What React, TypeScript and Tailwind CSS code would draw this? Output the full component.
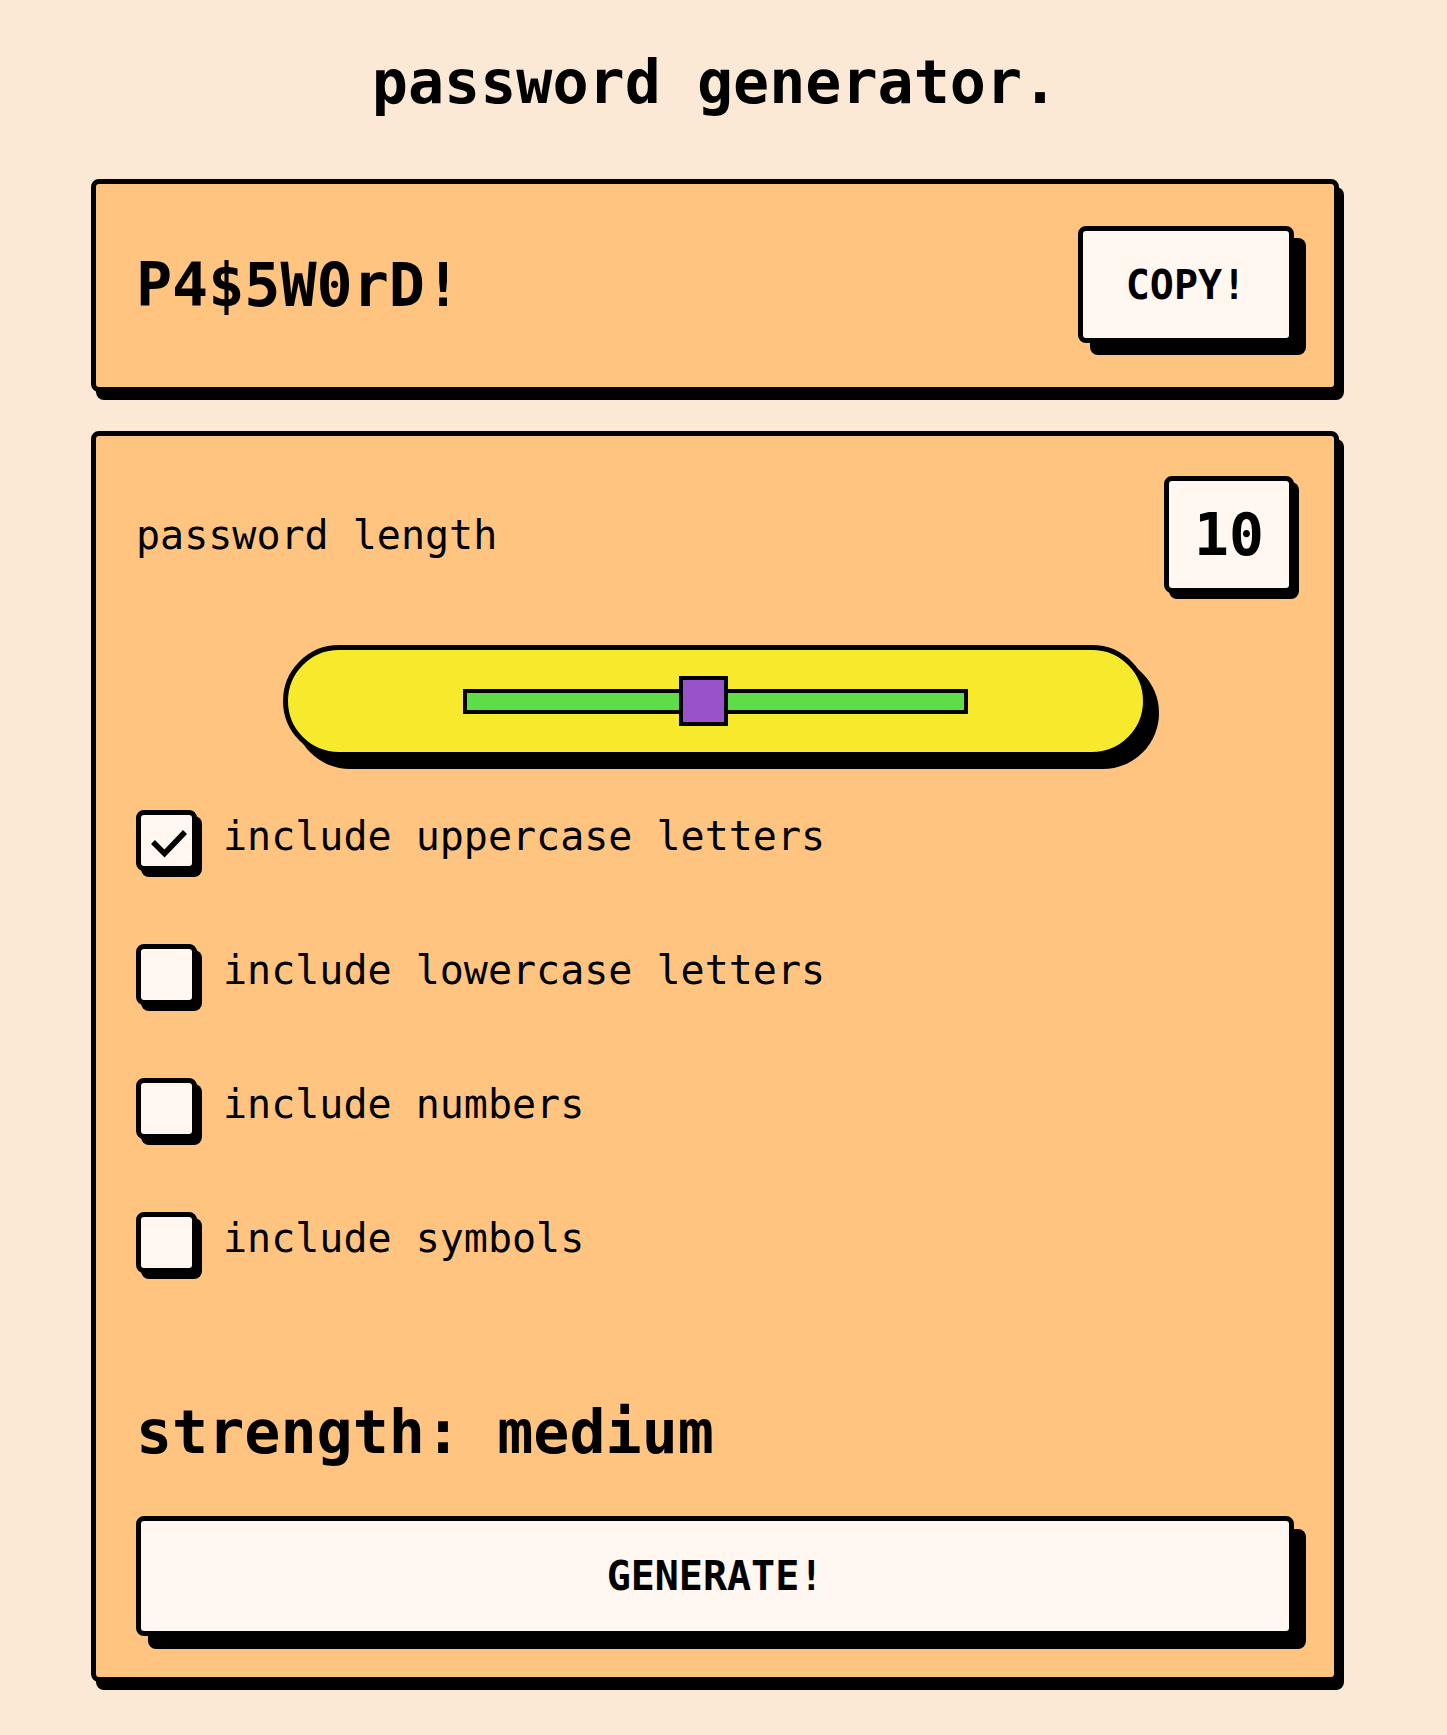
import { useState } from "react";

const options = [
  { key: "upper", label: "include uppercase letters" },
  { key: "lower", label: "include lowercase letters" },
  { key: "numbers", label: "include numbers" },
  { key: "symbols", label: "include symbols" },
];

const Checkbox = ({ checked }: { checked: boolean }) => (
  <span className="flex h-[61px] w-[61px] shrink-0 items-center justify-center rounded-lg border-[5px] border-black bg-[#fff7f0] shadow-[5px_6px_0_#000]">
    {checked && (
      <svg width="51" height="51" viewBox="0 0 51 51" fill="none">
        <polyline
          points="12,27 23.5,38.5 44,17"
          stroke="#000"
          strokeWidth="5.5"
          strokeLinejoin="miter"
        />
      </svg>
    )}
  </span>
);

const App = () => {
  const [length] = useState(10);
  const [checked, setChecked] = useState<Record<string, boolean>>({
    upper: true,
    lower: false,
    numbers: false,
    symbols: false,
  });

  const min = 1;
  const max = 20;
  const pct = (length - min) / (max - min);
  // track is 505 wide, thumb 49 wide, 4px border
  const thumbLeft = pct * (505 - 49) - 4;

  return (
    <div className="min-h-screen bg-[#fbe9d6] font-['DejaVu_Sans_Mono',monospace] text-black">
      <div className="w-[1430px] pb-[48px]">
        <div className="mx-auto w-[1248px]">
          <h1 className="pt-[52px] text-center text-[60px] font-bold leading-none">
            password generator.
          </h1>

          <section className="mt-[67px] flex items-center justify-between rounded-lg border-[5px] border-black bg-[#ffc580] px-10 pt-[42px] pb-[44px] shadow-[5px_8px_0_#000]">
            <span className="text-[60px] font-bold leading-none">P4$5W0rD!</span>
            <button className="h-[117px] w-[216px] rounded-lg border-[5px] border-black bg-[#fff7f0] text-[40px] font-bold leading-none shadow-[12px_12px_0_#000]">
              COPY!
            </button>
          </section>

          <section className="mt-[39px] rounded-lg border-[5px] border-black bg-[#ffc580] px-10 pt-10 pb-[41px] shadow-[5px_8px_0_#000]">
            <div className="flex items-center justify-between">
              <span className="text-[40px] leading-none">password length</span>
              <div className="flex h-[117px] w-[130px] items-center justify-center rounded-lg border-[5px] border-black bg-[#fff7f0] text-[58px] font-bold leading-none shadow-[5px_6px_0_#000]">
                {length}
              </div>
            </div>

            <div className="mx-auto mt-[52px] flex h-[112px] w-[865px] items-center justify-center rounded-full border-[5px] border-black bg-[#f7ea2c] shadow-[11px_12px_0_#000]">
              <div className="relative h-[25px] w-[505px] border-4 border-black bg-[#5dde48]">
                <div
                  className="absolute top-1/2 h-[50px] w-[49px] -translate-y-1/2 border-4 border-black bg-[#9a52ca]"
                  style={{ left: thumbLeft }}
                />
              </div>
            </div>

            <div className="mt-[52px] flex flex-col gap-[72px]">
              {options.map((o) => (
                <label
                  key={o.key}
                  className="flex h-[62px] cursor-pointer items-center gap-[26px]"
                  onClick={() => setChecked((c) => ({ ...c, [o.key]: !c[o.key] }))}
                >
                  <Checkbox checked={checked[o.key]} />
                  <span className="pb-[8px] text-[40px] leading-none">{o.label}</span>
                </label>
              ))}
            </div>

            <p className="mt-[129px] text-[60px] font-bold leading-none">strength: medium</p>

            <button className="mt-[54px] h-[120px] w-full rounded-lg border-[5px] border-black bg-[#fff7f0] text-[40px] font-bold leading-none shadow-[12px_13px_0_#000]">
              GENERATE!
            </button>
          </section>
        </div>
      </div>
    </div>
  );
};

export default App;
